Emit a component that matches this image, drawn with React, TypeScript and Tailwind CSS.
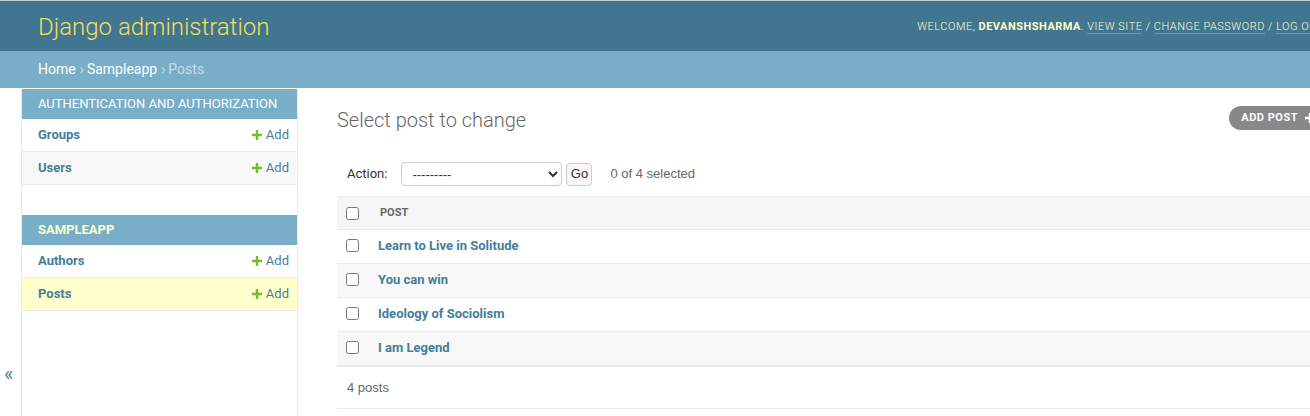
import React from 'react';

const PlusIcon = ({ color = '#70bf2b', size = 10 }: { color?: string; size?: number }) => (
  <svg width={size} height={size} viewBox="0 0 10 10" className="shrink-0">
    <path d="M3.8 0h2.4v3.8H10v2.4H6.2V10H3.8V6.2H0V3.8h3.8z" fill={color} />
  </svg>
);

interface SideRow {
  name: string;
  current?: boolean;
}

const SidebarModule = ({ title, rows, current }: { title: string; rows: SideRow[]; current?: boolean }) => (
  <div className="mb-[30px]">
    <div
      className={`h-[30px] flex items-center pl-4 bg-[#79aec8] text-[13px] uppercase ${
        current ? 'text-[#ffc] font-bold' : 'text-white'
      }`}
    >
      {title}
    </div>
    {rows.map((r, i) => (
      <div
        key={r.name}
        className={`h-[33px] flex items-center justify-between pl-4 pr-2 border-b border-[#eaeaea] text-[13px] ${
          r.current ? 'bg-[#ffc]' : i % 2 === 1 ? 'bg-[#f8f8f8]' : 'bg-white'
        }`}
      >
        <span className="font-bold text-[#447e9b]">{r.name}</span>
        <span className="flex items-center gap-1 text-[#447e9b]">
          <PlusIcon />
          Add
        </span>
      </div>
    ))}
  </div>
);

const posts = ['Learn to Live in Solitude', 'You can win', 'Ideology of Sociolism', 'I am Legend'];

export default function App() {
  return (
    <div className="w-[1310px] h-[416px] overflow-hidden bg-white font-['Roboto',sans-serif] text-[#333]">
      <div className="w-[1364px] border-t border-[#cccccc]">
        {/* Header */}
        <div className="h-[50px] bg-[#417690] flex items-center justify-between pl-[38px] pr-[40px] pt-[2px]">
          <div className="text-[24px] font-light text-[#f5dd5d] leading-none">Django administration</div>
          <div className="text-[11px] uppercase tracking-[0.5px] text-[#ffc] font-light">
            Welcome, <strong className="font-bold">devanshsharma</strong>.{' '}
            <span className="border-b border-white/25">View site</span> /{' '}
            <span className="border-b border-white/25">Change password</span> /{' '}
            <span className="border-b border-white/25">Log out</span>
          </div>
        </div>

        {/* Breadcrumbs */}
        <div className="h-[37px] bg-[#79aec8] flex items-center pl-[38px] text-[14px] text-[#c4dce8]">
          <span className="text-white">Home</span>
          <span className="ml-[4px] mr-[3px]">›</span>
          <span className="text-white">Sampleapp</span>
          <span className="ml-[4px] mr-[3px]">›</span>
          <span>Posts</span>
        </div>

        <div className="flex">
          {/* Toggle */}
          <div className="w-[22px] h-[330px] border-r border-[#eaeaea] flex justify-start pl-[4px] pt-[276px] text-[20px] text-[#447e9b] leading-none">
            «
          </div>

          {/* Sidebar */}
          <div className="w-[276px] border-r border-[#eaeaea] pt-px h-[330px]">
            <SidebarModule
              title="Authentication and Authorization"
              rows={[{ name: 'Groups' }, { name: 'Users' }]}
            />
            <SidebarModule
              title="Sampleapp"
              current
              rows={[{ name: 'Authors' }, { name: 'Posts', current: true }]}
            />
          </div>

          {/* Content */}
          <div className="flex-1 pl-[39px] pr-[40px] pt-5">
            <div className="flex justify-between items-start">
              <h1 className="text-[20px] font-light text-[#666] leading-6">Select post to change</h1>
              <div className="-mt-[2px] h-[24px] rounded-[15px] bg-[#888] pl-3 pr-[9px] flex items-center gap-[7px] text-[11px] font-bold uppercase tracking-[0.5px] text-white">
                Add post
                <PlusIcon color="#ffffff" size={10} />
              </div>
            </div>

            {/* Actions */}
            <div className="mt-5 p-[10px] flex items-center h-[44px] text-[13px]">
              <span className="text-[#333]">Action:</span>
              <select className="ml-[14px] w-[161px] h-[24px] border border-[#ccc] rounded-[4px] text-[13px] pl-[6px] font-['Liberation_Sans',sans-serif] text-[#333]">
                <option>---------</option>
              </select>
              <button className="ml-[4px] h-[23px] w-[26px] border border-[#ccc] rounded-[4px] bg-[#f8f8f8] text-[13px] font-['Liberation_Sans',sans-serif] text-[#333]">
                Go
              </button>
              <span className="ml-[18px] text-[#666] font-['Liberation_Sans',sans-serif]">0 of 4 selected</span>
            </div>

            {/* Table */}
            <div className="border-t border-[#eaeaea]">
              <div className="h-[33px] flex items-center bg-[#f6f6f6] border-b border-[#eaeaea] pl-[9px] pt-[1px]">
                <input type="checkbox" className="m-0 w-[13px] h-[13px]" readOnly />
                <span className="ml-[21px] text-[11px] font-bold text-[#666] uppercase">Post</span>
              </div>
              {posts.map((p, i) => (
                <div
                  key={p}
                  className={`h-[34px] flex items-center border-b border-[#eaeaea] pl-[9px] pb-[2px] ${
                    i % 2 === 1 ? 'bg-[#f8f8f8]' : 'bg-white'
                  }`}
                >
                  <input type="checkbox" className="m-0 w-[13px] h-[13px]" readOnly />
                  <span className="ml-[19px] text-[13px] font-bold text-[#447e9b]">{p}</span>
                </div>
              ))}
            </div>
            <div className="border-t border-b border-[#eaeaea] h-[43px] flex items-center pl-[10px] text-[13px] text-[#666] font-['Liberation_Sans',sans-serif]">
              4 posts
            </div>
          </div>
        </div>
      </div>
    </div>
  );
}
